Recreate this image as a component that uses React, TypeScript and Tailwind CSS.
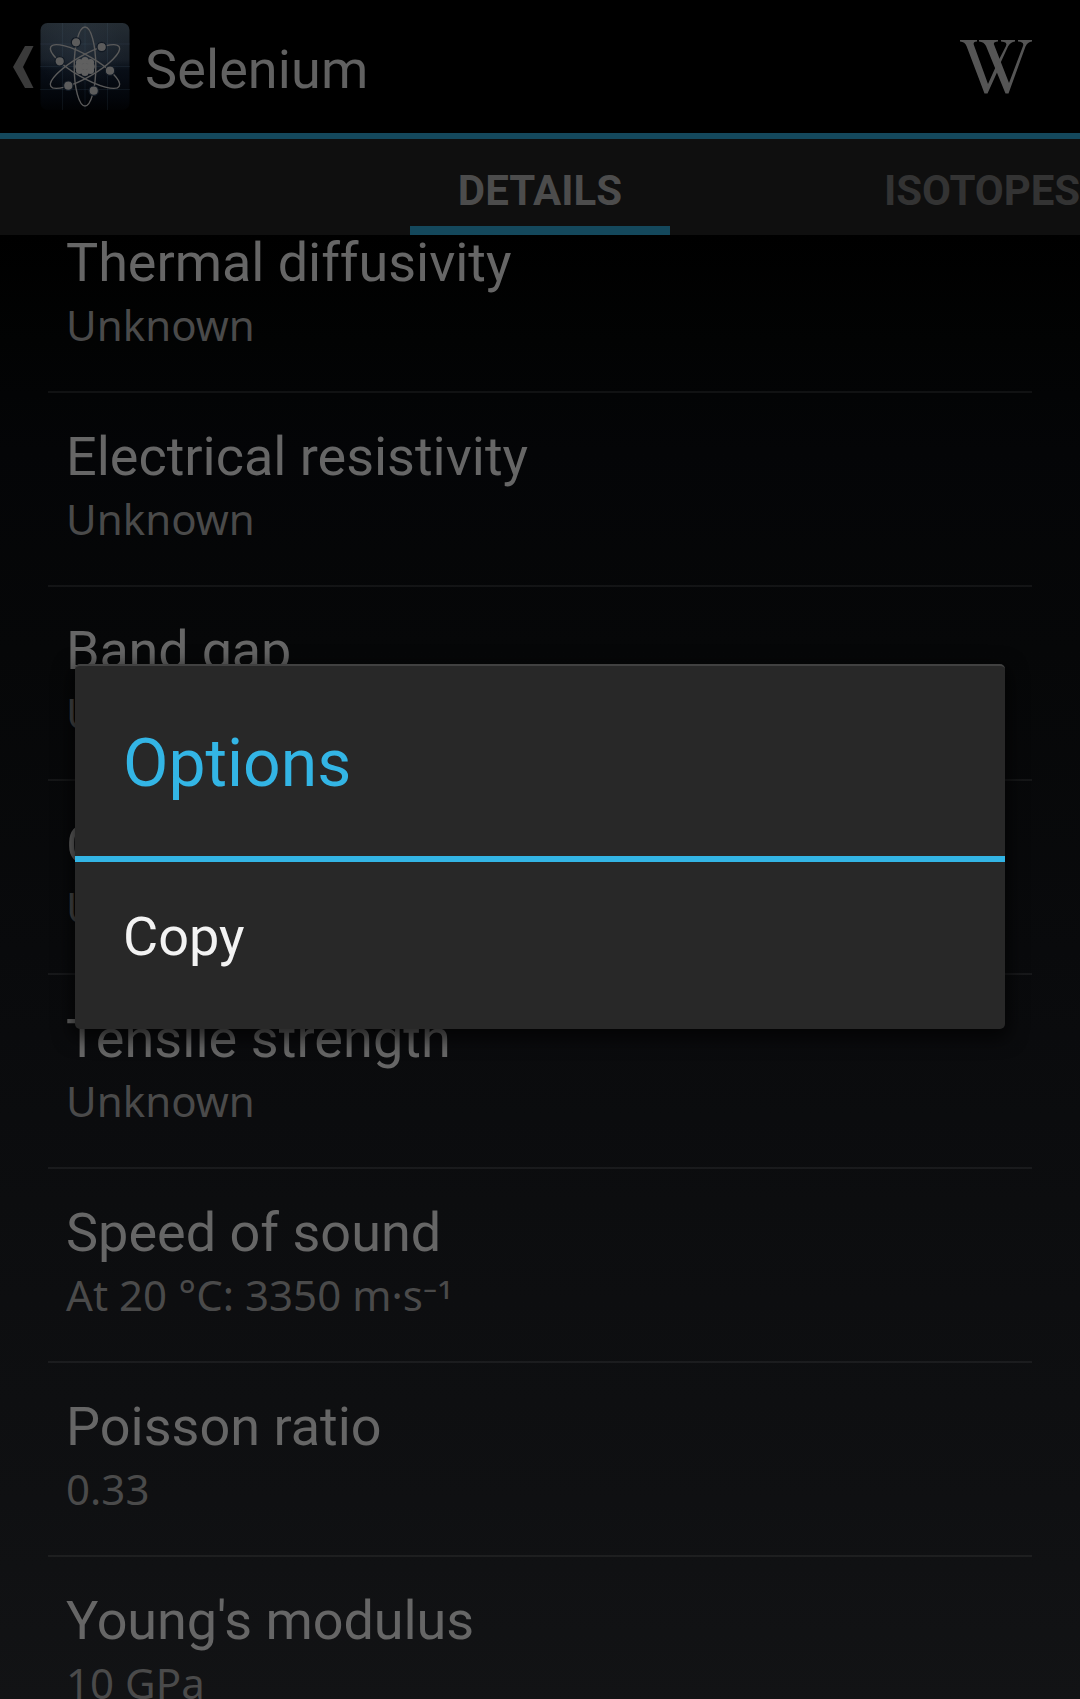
const properties = [
  { name: 'Thermal diffusivity', value: 'Unknown', tracking: 'tracking-[-0.06px]' },
  { name: 'Electrical resistivity', value: 'Unknown', tracking: 'tracking-[-0.02px]' },
  { name: 'Band gap', value: 'Unknown', tracking: 'tracking-[-0.2px]' },
  { name: 'Curie point', value: 'Unknown', tracking: 'tracking-normal' },
  { name: 'Tensile strength', value: 'Unknown', tracking: 'tracking-[0.07px]' },
  { name: 'Speed of sound', value: 'At 20 °C: 3350 m·s', exponent: '⁻¹', tracking: 'tracking-normal' },
  { name: 'Poisson ratio', value: '0.33', tracking: 'tracking-normal' },
  { name: "Young's modulus", value: '10 GPa', tracking: 'tracking-[-0.07px]' },
];

const electrons = [
  [36, 19.3],
  [61.7, 24],
  [19.7, 38.3],
  [70, 47.7],
  [28.3, 62.7],
  [53.7, 67.7],
];

const nucleons = [
  [45, 37.5],
  [39.5, 39.5],
  [50.5, 39.5],
  [38.8, 43.5],
  [51.2, 43.5],
  [39.5, 47.5],
  [50.5, 47.5],
  [45, 49.5],
  [45, 43.5],
];

function BackChevron() {
  return (
    <svg className="ml-[13px] h-[42px] w-[21px] shrink-0" viewBox="0 0 21 42">
      <path d="M12 0h8.5L10 21l10.5 21H12L0 21z" fill="#3a3a3a" />
    </svg>
  );
}

function AtomIcon() {
  return (
    <svg className="ml-[6px] h-[88px] w-[90px] shrink-0" viewBox="0 0 90 88">
      <defs>
        <linearGradient id="tile" x1="0" y1="0" x2="0" y2="1">
          <stop offset="0" stopColor="#242c33" />
          <stop offset="0.42" stopColor="#171e27" />
          <stop offset="0.54" stopColor="#080e17" />
          <stop offset="0.85" stopColor="#03060b" />
          <stop offset="1" stopColor="#010204" />
        </linearGradient>
        <radialGradient id="glow" cx="0.45" cy="0.3" r="0.5">
          <stop offset="0" stopColor="#46586b" stopOpacity="0.2" />
          <stop offset="1" stopColor="#46586b" stopOpacity="0" />
        </radialGradient>
      </defs>
      <rect x="0.5" width="89" height="87" rx="7" fill="url(#tile)" />
      <rect x="0.5" width="89" height="87" rx="7" fill="url(#glow)" />
      <path d="M22.5 0v87M45 0v87M67.5 0v87M0 21h90M0 43.5h90M0 66.5h90" stroke="#5d7890" strokeOpacity="0.12" />
      <g fill="none" stroke="#5a5a5a" strokeWidth="1.4">
        <ellipse cx="45" cy="43.5" rx="10.8" ry="39.5" />
        <ellipse cx="45" cy="43.5" rx="10.8" ry="39.5" transform="rotate(60 45 43.5)" />
        <ellipse cx="45" cy="43.5" rx="10.8" ry="39.5" transform="rotate(-60 45 43.5)" />
      </g>
      {electrons.map(([x, y]) => (
        <circle key={x} cx={x} cy={y} r="4.7" fill="#5c5c5c" stroke="#111923" strokeWidth="1.2" />
      ))}
      {nucleons.map(([x, y], i) => (
        <circle key={i} cx={x} cy={y} r="3.6" fill="#606060" />
      ))}
    </svg>
  );
}

function WikipediaLogo() {
  return (
    <svg className="mr-12 h-[54px] w-[72px]" viewBox="0 0 72 54" aria-label="Wikipedia">
      <g fill="#555555">
        <path d="M0 0h17v1.6q-4 .3-3.3 2.8L28 44l9-20 2 4-11.5 25.500h-3L6.500 6Q5 2 0 1.600z" />
        <path d="M19 0h19v1.600q-5 .3-4 3L49 43 63 6q1.500-4-5-4.400V0h14v1.600q-4.500.4-6.500 5L48.500 53.500h-3L26 6Q24 2 19 1.600z" />
        <path d="M41 0h14v1.600q-4.500.3-7 5L40 24l-1.500-3.500L46 6q2-4-5-4.400z" />
      </g>
    </svg>
  );
}

export default function App() {
  return (
    <div className="relative flex h-[1699px] w-[1080px] flex-col overflow-hidden bg-[linear-gradient(to_bottom,#000000_235px,#020303_340px,#040507_450px,#060708_650px,#090a0c_950px,#0c0d0f_1200px,#0f1012_1500px,#121315_1699px)] font-['Roboto',sans-serif]">
      <header className="flex h-[139px] shrink-0 items-center border-b-6 border-[#14485c] bg-black">
        <BackChevron />
        <AtomIcon />
        <h1 className="ml-[15px] mt-[6px] grow text-[54px] leading-[64px] tracking-[0.1px] text-[#616161]">Selenium</h1>
        <WikipediaLogo />
      </header>
      <nav className="grid h-24 shrink-0 grid-cols-[410px_260px_410px] bg-[#0f0f0f] text-[42px] font-bold leading-[50px]">
        <span />
        <span className="border-b-9 border-[#14485c] pt-[27px] text-center text-[#4c4c4c]">DETAILS</span>
        <span className="pt-[27px] text-right tracking-[-0.08px] text-[#333333]">ISOTOPES</span>
      </nav>
      <main className="grow overflow-hidden">
        <ul className="-mt-9 px-12">
          {properties.map((property) => (
            <li key={property.name} className="h-[194px] border-b-2 border-white/6 pl-[18px] pt-8">
              <div className={`text-[54px] leading-[64px] text-[#666666] ${property.tracking}`}>{property.name}</div>
              <div className="mt-px h-[57px] font-['Noto_Sans',sans-serif] text-[42px] leading-[57px] tracking-[0.04px] text-[#4a4a4a]">
                {property.value}
                {property.exponent && <span className="align-[-5px] leading-none tracking-[0.6px]">{property.exponent}</span>}
              </div>
            </li>
          ))}
        </ul>
      </main>
      <div
        role="dialog"
        className="absolute left-[75px] top-[664px] h-[365px] w-[930px] rounded-[5px] border-t-2 border-[#414141] bg-[#282828] shadow-[0_6px_18px_4px_rgba(0,0,0,0.65)]"
      >
        <h2 className="h-[196px] border-b-6 border-[#33b5e5] pl-12 pt-[59px] text-[66px] leading-[78px] text-[#33b5e5]">Options</h2>
        <div className="pl-12 pt-[43px] text-[54px] leading-[64px] text-[#f3f3f3]">Copy</div>
      </div>
    </div>
  );
}
